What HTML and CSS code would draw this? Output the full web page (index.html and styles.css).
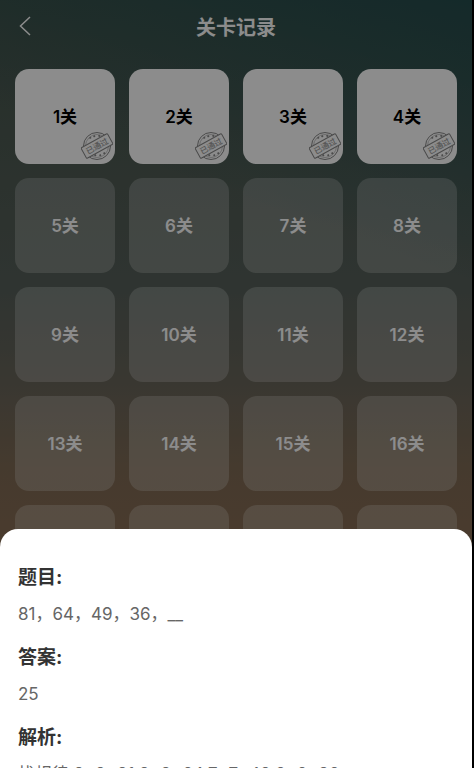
FILE: index.html
```html
<!DOCTYPE html>
<html lang="zh-CN">
<head>
    <meta charset="UTF-8">
    <meta name="viewport" content="width=device-width, initial-scale=1.0">
    <title>关卡记录</title>
    <link rel="stylesheet" href="styles.css">
</head>
<body>
    <!-- 已通过印章 -->
    <svg class="defs" aria-hidden="true">
        <symbol id="stamp" viewBox="0 0 32 32">
            <g fill="none" stroke="#888" stroke-width="1">
                <circle cx="16" cy="16" r="13.500"/>
                <circle cx="16" cy="16" r="11.500" stroke-width="0.5"/>
            </g>
            <g fill="#888">
                <path d="M8 8l1.500-1.500 1 1.500-1.500 1zM12 6l1.500-1 1 1.500-1.500 1zM17 5.500l1.500-.8 1 1.500-1.500 1zM13 25l1.500-1 1 1.500-1.500 1zM18 25l1.500-1 1 1.500-1.500 1zM22 23l1.500-1 1 1.500-1.500 1z"/>
            </g>
            <g transform="rotate(-29 16 16)">
                <rect class="stamp-band" x="1" y="10" width="30" height="12" rx="1"/>
                <text class="stamp-text" x="16" y="19" text-anchor="middle">已通过</text>
            </g>
        </symbol>
    </svg>

    <div class="page">
        <header class="header">
            <button class="back" aria-label="返回">
                <svg width="12" height="20" viewBox="0 0 12 20" fill="none" stroke="#fff" stroke-width="1.5">
                    <path d="M11 1L1.500 10l9.500 9"/>
                </svg>
            </button>
            <h1>关卡记录</h1>
        </header>

        <div class="levels">
            <button class="level passed">1关<svg class="stamp"><use href="#stamp"/></svg></button>
            <button class="level passed">2关<svg class="stamp"><use href="#stamp"/></svg></button>
            <button class="level passed">3关<svg class="stamp"><use href="#stamp"/></svg></button>
            <button class="level passed">4关<svg class="stamp"><use href="#stamp"/></svg></button>
            <button class="level">5关</button>
            <button class="level">6关</button>
            <button class="level">7关</button>
            <button class="level">8关</button>
            <button class="level">9关</button>
            <button class="level">10关</button>
            <button class="level">11关</button>
            <button class="level">12关</button>
            <button class="level">13关</button>
            <button class="level">14关</button>
            <button class="level">15关</button>
            <button class="level">16关</button>
            <button class="level" aria-label="17关"></button>
            <button class="level" aria-label="18关"></button>
            <button class="level" aria-label="19关"></button>
            <button class="level" aria-label="20关"></button>
        </div>
    </div>

    <!-- 题目弹窗 -->
    <div class="mask">
        <div class="sheet">
            <h2>题目:</h2>
            <p>81，64，49，36，__</p>
            <h2>答案:</h2>
            <p>25</p>
            <h2>解析:</h2>
            <p>找规律,9*9=81,8*8=64,7*7=49,6*6=36</p>
        </div>
    </div>
</body>
</html>
```
FILE: styles.css
```css
* {
    box-sizing: border-box;
}

body {
    margin: 0;
    height: 100vh;
    overflow: hidden;
    background: #000;
    font-family: Inter, "Noto Sans CJK SC", sans-serif;
}

.defs {
    display: none;
}

.page {
    height: 100vh;
    overflow: hidden;
    margin-right: 2px;
    padding: 0 15px;
    background:
        linear-gradient(200deg, rgba(30, 75, 78, 0.8) 0%, rgba(30, 75, 78, 0) 30%),
        linear-gradient(#45554c 0%, #57605a 38%, #69655a 50%, #7f6b55 61%, #856c54 68%);
}

/* 顶部 */
.header {
    display: grid;
    grid-template-columns: 20px 1fr 20px;
    align-items: center;
    height: 52px;
    margin-bottom: 17px;
    color: #fff;
}

.header h1 {
    margin: 0;
    font-size: 20px;
    font-weight: 700;
    text-align: center;
}

.back {
    display: flex;
    padding: 0 4px;
    border: none;
    background: none;
    cursor: pointer;
}

/* 关卡列表 */
.levels {
    display: grid;
    grid-template-columns: repeat(4, 1fr);
    gap: 14px;
}

.level {
    position: relative;
    height: 95px;
    padding: 0 0 2px;
    border: none;
    border-radius: 14px;
    background: rgba(255, 255, 255, 0.22);
    color: #fff;
    font-family: inherit;
    font-size: 17px;
    font-weight: 600;
    cursor: pointer;
}

.level.passed {
    background: #fff;
    color: #000;
}

.stamp {
    position: absolute;
    right: 2px;
    bottom: 2px;
    width: 32px;
    height: 32px;
}

.stamp-band {
    fill: #fff;
    stroke: #888;
    stroke-width: 1;
}

.stamp-text {
    fill: #999;
    font-size: 8px;
    font-weight: 500;
}

/* 弹窗 */
.mask {
    position: fixed;
    inset: 0 2px 0 0;
    display: flex;
    flex-direction: column;
    justify-content: flex-end;
    background: rgba(0, 0, 0, 0.45);
}

.sheet {
    height: 239px;
    padding: 35px 18px 0;
    overflow: hidden;
    border-radius: 18px 18px 0 0;
    background: #fff;
}

.sheet h2 {
    margin: 0;
    color: #333;
    font-size: 19px;
    font-weight: 700;
    line-height: 28px;
}

.sheet p {
    margin: 8px 0 16px;
    color: #666;
    font-size: 17px;
    line-height: 28px;
}
```
